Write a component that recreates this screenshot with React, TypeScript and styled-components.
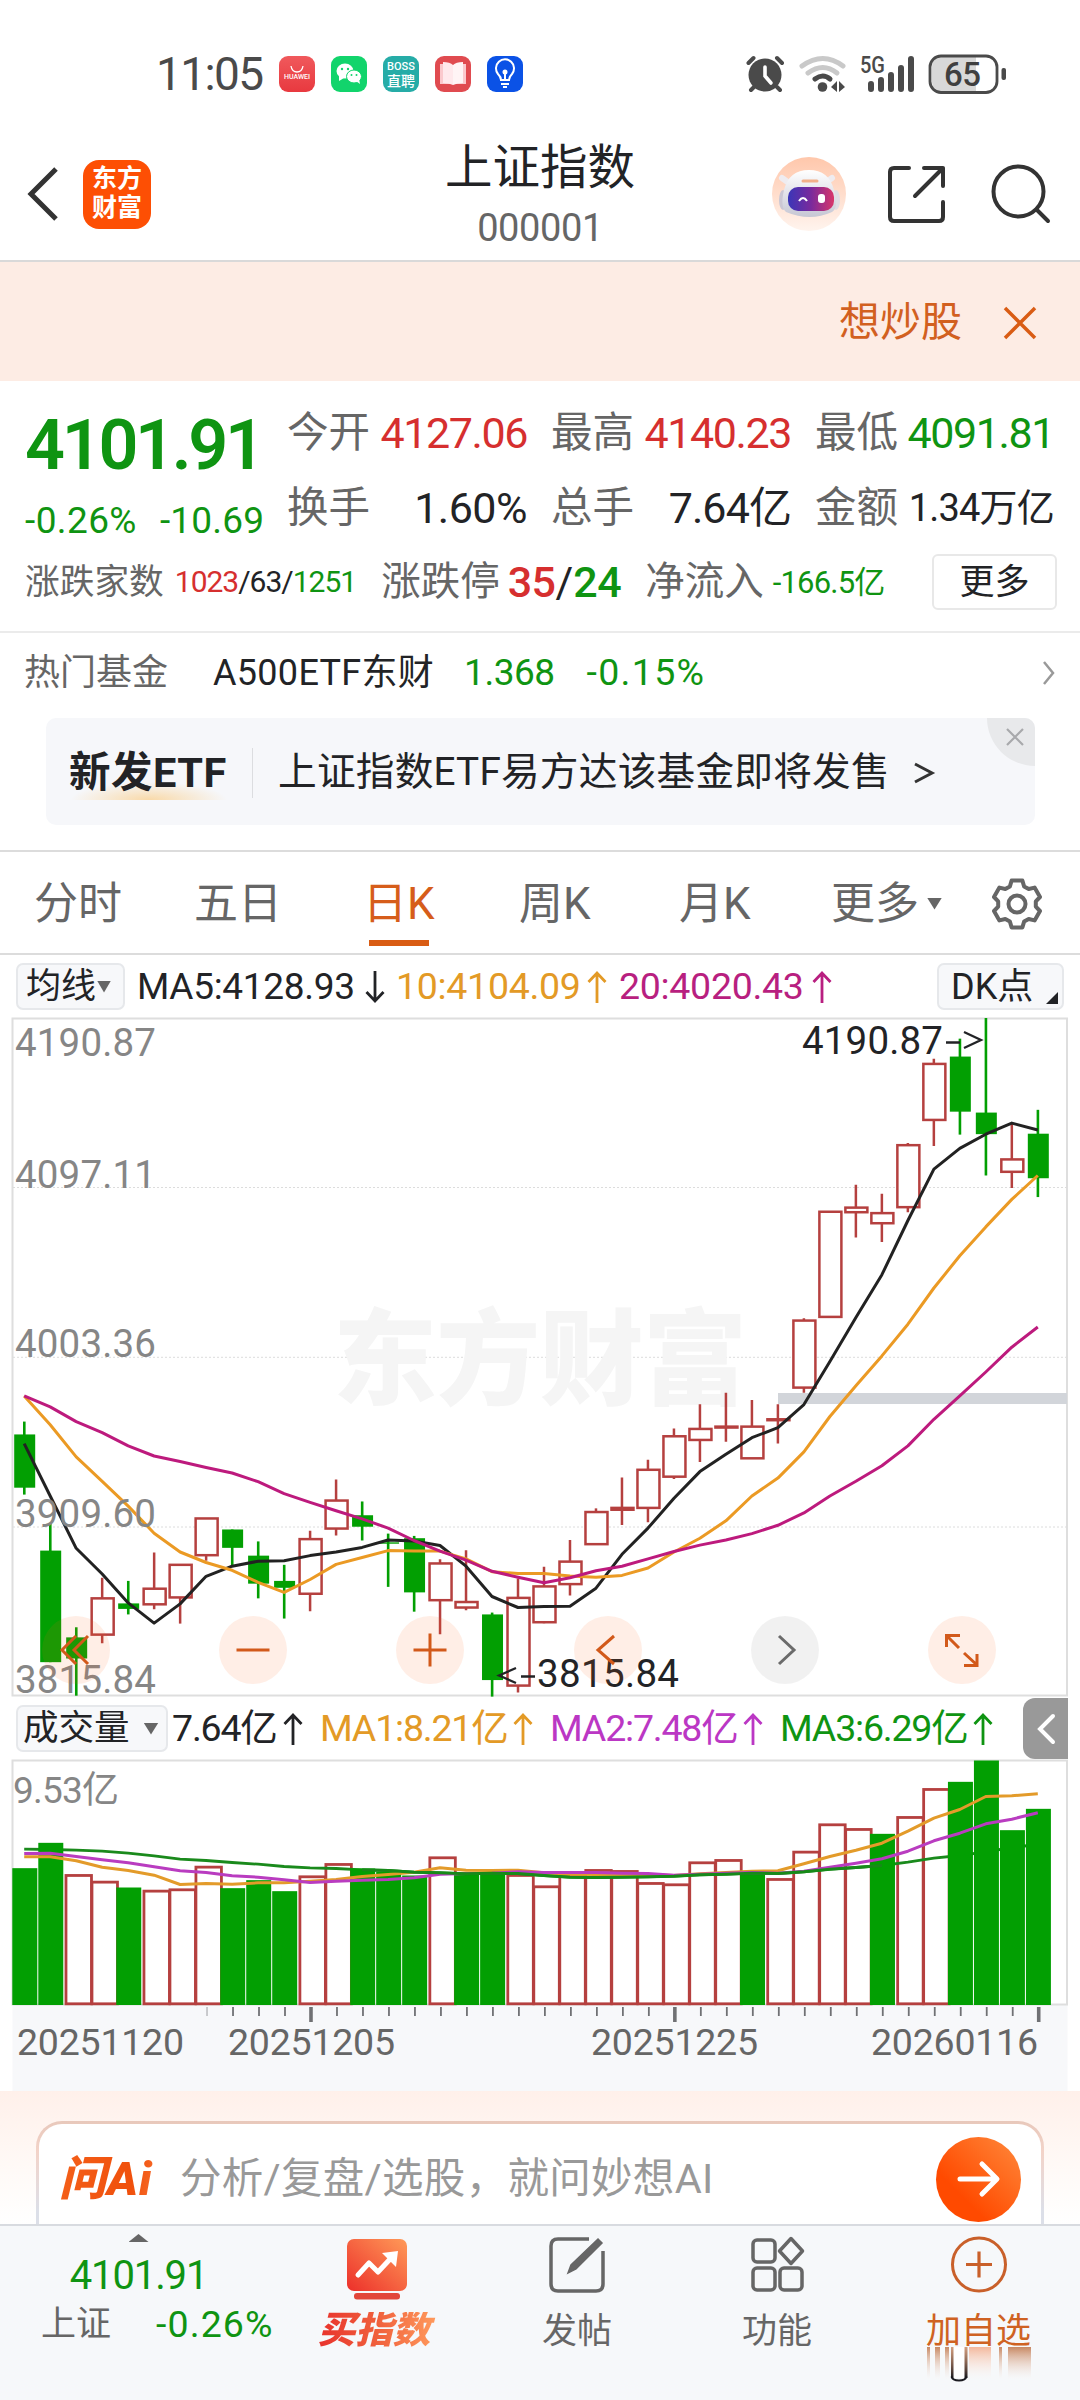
import React from 'react';
import styled, { createGlobalStyle, css } from 'styled-components';

const GREEN = '#0f9412';
const FILL_GREEN = '#029f02';
const RED = '#d62f2f';
const CANDLE_RED = '#b5403f';
const ORANGE = '#d65d1a';
const INK = '#222326';
const GRAY = '#666666';

const GlobalStyle = createGlobalStyle`
  * { box-sizing: border-box; }
  body {
    margin: 0;
    background: #fff;
    font-family: Roboto, 'Noto Sans CJK SC', sans-serif;
    color: ${INK};
  }
  svg { display: block; flex: none; overflow: visible; }
`;

const Screen = styled.div`
  width: 1080px;
  height: 2400px;
  overflow: hidden;
  background: #fff;
  display: flex;
  flex-direction: column;
`;

interface TxtProps {
  $size?: number;
  $color?: string;
  $ls?: number;
  $weight?: number;
}
const Txt = styled.span<TxtProps>`
  font-size: ${(p) => p.$size ?? 36}px;
  color: ${(p) => p.$color ?? INK};
  letter-spacing: ${(p) => p.$ls ?? 0}px;
  font-weight: ${(p) => p.$weight ?? 400};
  line-height: 1;
  white-space: nowrap;
  flex: none;
`;

/* ---------- status bar ---------- */

const StatusBar = styled.div`
  height: 112px;
  flex: none;
  padding: 36px 50px 0 156px;
  display: flex;
  align-items: center;
  justify-content: space-between;
`;
const StatusSide = styled.div<{ $gap: number }>`
  display: flex;
  align-items: center;
  gap: ${(p) => p.$gap}px;
`;
const Clock = styled(Txt)`
  width: 107px;
`;
const AppBadge = styled.div<{ $bg: string }>`
  width: 36px;
  height: 36px;
  border-radius: 9px;
  background: ${(p) => p.$bg};
  color: #fff;
  display: flex;
  flex-direction: column;
  align-items: center;
  justify-content: center;
  font-weight: 500;
  line-height: 1;
`;
const BadgeLine = styled.span<{ $size: number }>`
  font-size: ${(p) => p.$size}px;
  line-height: ${(p) => p.$size + 2}px;
  white-space: nowrap;
`;

function StatusIcons() {
  return (
    <StatusSide $gap={0}>
      <svg width="300" height="56" viewBox="730 45 300 56">
        <g stroke="#4a4a4a" fill="none" strokeLinecap="round">
          <circle cx="765" cy="74" r="16.5" fill="#4a4a4a" stroke="none" />
          <path d="M748.5 62l5-5M782 62l-5-5" strokeWidth="4" />
          <path d="M754 86l-3 3M777 86l3 3" strokeWidth="4" />
          <path d="M765 66v9l6 7" stroke="#fff" strokeWidth="3.6" />
        </g>
        <g fill="none" strokeLinecap="round" strokeWidth="5">
          <path d="M802 65q21-15 41 0" stroke="#c9c9c9" />
          <path d="M808 72q15-11 29 0" stroke="#c9c9c9" />
          <path d="M815 78q8-6 15 0" stroke="#4a4a4a" />
        </g>
        <circle cx="822.5" cy="86" r="4.8" fill="#4a4a4a" />
        <path d="M831 86l6-6v11zM839 80l6 6l-6 5z" fill="#4a4a4a" />
        <g stroke="#4a4a4a" strokeWidth="6" strokeLinecap="round">
          <path d="M871 83v5M881 79v9M891 74v14M901 67v21M911 58v30" />
        </g>
        <text x="860" y="72" fontSize="24" fontWeight="500" fill="#4a4a4a" textLength="25" lengthAdjust="spacingAndGlyphs">5G</text>
        <path d="M942 56h34v35h-34q-10 0-10-10v-15q0-10 10-10z" fill="#d8d8d8" />
        <rect x="930" y="55" width="67" height="36.5" rx="11" fill="none" stroke="#4a4a4a" strokeWidth="2.8" />
        <rect x="1001.500" y="67" width="4.500" height="12" rx="2" fill="#4a4a4a" />
        <text x="944" y="85" fontSize="33" fontWeight="500" fill="#3f3f3f" textLength="37">65</text>
      </svg>
    </StatusSide>
  );
}

function Status() {
  return (
    <StatusBar>
      <StatusSide $gap={16}>
        <Clock $size={46} $ls={-1.6} $color="#4a4a4a">11:05</Clock>
        <AppBadge $bg="linear-gradient(#f0595c,#e8393f)">
          <svg width="14" height="7" viewBox="0 0 14 7"><path d="M1 0q1 6 6 6t6-6" fill="none" stroke="#fff" strokeWidth="1.300" /></svg>
          <BadgeLine $size={7}>HUAWEI</BadgeLine>
        </AppBadge>
        <AppBadge $bg="#12d46c">
          <svg width="26" height="22" viewBox="0 0 26 22">
            <ellipse cx="9" cy="8" rx="8.500" ry="7.500" fill="#fff" />
            <path d="M3 12l0 6l5-3z" fill="#fff" />
            <ellipse cx="18" cy="13.500" rx="7.500" ry="6.500" fill="#fff" stroke="#12d46c" />
            <path d="M20 18l4 3l-1-5z" fill="#fff" />
            <g fill="#12d46c"><circle cx="6" cy="6" r="1.200" /><circle cx="12" cy="6" r="1.200" /><circle cx="15.500" cy="12" r="1" /><circle cx="20.500" cy="12" r="1" /></g>
          </svg>
        </AppBadge>
        <AppBadge $bg="#26aca7">
          <BadgeLine $size={11}>BOSS</BadgeLine>
          <BadgeLine $size={14}>直聘</BadgeLine>
        </AppBadge>
        <AppBadge $bg="#e04b50">
          <svg width="26" height="24" viewBox="0 0 26 24">
            <path d="M0 2h4l9 2l9-2h4v20h-26z" fill="#fbc9cd" />
            <path d="M3 0q7 0 10 3v20q-4-2-10-2z" fill="#ffe9ec" />
            <path d="M23 0q-7 0-10 3v20q4-2 10-2z" fill="#fff4f5" />
          </svg>
        </AppBadge>
        <AppBadge $bg="#0b52e6">
          <svg width="22" height="28" viewBox="0 0 22 28" fill="none" stroke="#fff" strokeWidth="2">
            <path d="M7 20q0-3-3-6a9 9 0 1 1 14 0q-3 3-3 6zM7 24h8M9 27h4M11 20v-7" />
            <circle cx="11" cy="12" r="1.500" fill="#fff" />
          </svg>
        </AppBadge>
      </StatusSide>
      <StatusIcons />
    </StatusBar>
  );
}

/* ---------- header ---------- */

const Header = styled.header`
  height: 150px;
  flex: none;
  border-bottom: 2px solid #d9d9d9;
  display: grid;
  grid-template-columns: 1fr 300px 1fr;
  align-items: center;
`;
const HeaderLeft = styled.div`
  display: flex;
  align-items: center;
  gap: 24px;
  padding: 16px 0 0 26px;
`;
const HeaderRight = styled.div`
  display: flex;
  align-items: center;
  justify-content: flex-end;
  padding: 15px 28px 0 0;
`;
const HeaderTitle = styled.div`
  display: flex;
  flex-direction: column;
  align-items: center;
  gap: 16px;
  padding-top: 20px;
`;
const Brand = styled.div`
  width: 68px;
  height: 69px;
  border-radius: 16px;
  background: #fd4f04;
  color: #fff;
  display: flex;
  flex-direction: column;
  align-items: center;
  padding-top: 4px;
`;
const BrandLine = styled.span`
  font: 700 25px/29px Roboto, 'Noto Sans CJK SC', sans-serif;
`;

function TopHeader() {
  return (
    <Header>
      <HeaderLeft>
        <svg width="33" height="56" viewBox="0 0 33 56"><path d="M30 3L5 28L30 53" fill="none" stroke="#333" strokeWidth="5" /></svg>
        <Brand>
          <BrandLine>东方</BrandLine>
          <BrandLine>财富</BrandLine>
        </Brand>
      </HeaderLeft>
      <HeaderTitle>
        <Txt $size={47.5}>上证指数</Txt>
        <Txt $size={38} $color={GRAY} $ls={-0.4}>000001</Txt>
      </HeaderTitle>
      <HeaderRight>
        <svg width="284" height="80" viewBox="768 154 284 80">
          <defs>
            <linearGradient id="halo" x1="0" y1="0" x2="0" y2="1"><stop offset="0" stopColor="#ffc7ab" /><stop offset="1" stopColor="#fff4ee" /></linearGradient>
            <linearGradient id="visor"><stop offset="0" stopColor="#3a36b8" /><stop offset=".5" stopColor="#7a2a9c" /><stop offset="1" stopColor="#d8356a" /></linearGradient>
            <linearGradient id="shell" x1="0" y1="0" x2="0" y2="1"><stop offset="0" stopColor="#fff" /><stop offset="1" stopColor="#c6c7d4" /></linearGradient>
          </defs>
          <circle cx="809" cy="194" r="37" fill="url(#halo)" />
          <path d="M782 178l7 5M832 178l-7 5" stroke="#efecf0" strokeWidth="6" strokeLinecap="round" />
          <ellipse cx="783" cy="200" rx="4" ry="10" fill="#cbc7d4" />
          <ellipse cx="836" cy="200" rx="4" ry="10" fill="#e0dbe3" />
          <path d="M784 190q5-20 25-20t25 20q5 18-2 22q-22 10-46 0q-6-5-2-22z" fill="url(#shell)" />
          <path d="M803 181h14" stroke="#f2b08a" strokeWidth="3" strokeLinecap="round" />
          <rect x="788" y="187" width="46" height="24" rx="10" fill="url(#visor)" />
          <path d="M799 201q4-6 8 0" stroke="#fff" strokeWidth="2" fill="none" />
          <rect x="818" y="194" width="7" height="9" rx="3" fill="#fff" />
          <g fill="none" stroke="#333" strokeWidth="4" strokeLinecap="round" strokeLinejoin="round">
            <path d="M909 168h-15q-4 0-4 4v45q0 4 4 4h45q4 0 4-4v-15" />
            <path d="M924 168h19v18M943 168l-28 28" />
            <circle cx="1018.500" cy="191.500" r="25" />
            <path d="M1037 210l11 11" />
          </g>
        </svg>
      </HeaderRight>
    </Header>
  );
}

/* ---------- promo banner ---------- */

const Banner = styled.div`
  height: 119px;
  flex: none;
  background: #fdece4;
  display: flex;
  align-items: center;
  justify-content: flex-end;
  gap: 41px;
  padding: 2px 43px 0 0;
`;

/* ---------- quote ---------- */

const Quote = styled.section`
  height: 252px;
  flex: none;
  border-bottom: 2px solid #ebebeb;
  padding: 27px 25px 0;
  display: flex;
  flex-direction: column;
`;
const QuoteTop = styled.div`
  display: grid;
  grid-template-columns: 238px 240px 240px 239px;
  column-gap: 24px;
  height: 143px;
`;
const PriceBox = styled.div`
  display: flex;
  flex-direction: column;
  padding-top: 2px;
`;
const Change = styled.div`
  display: flex;
  gap: 23px;
  padding-top: 22px;
`;
const StatColumn = styled.div`
  display: grid;
  grid-template-rows: 50px 50px;
  row-gap: 25px;
`;
const Stat = styled.div`
  display: flex;
  align-items: center;
  justify-content: space-between;
`;
const BreadthRow = styled.div`
  display: flex;
  align-items: center;
  height: 62px;
`;
const Spacer = styled.div<{ $w: number }>`
  width: ${(p) => p.$w}px;
  flex: none;
`;
const MoreButton = styled.button`
  width: 125px;
  height: 56px;
  margin-left: auto;
  margin-right: -2px;
  border: 2px solid #e8e8e8;
  border-radius: 6px;
  background: #fff;
  font: 400 35px/1 Roboto, 'Noto Sans CJK SC', sans-serif;
  color: ${INK};
  padding: 0;
`;

interface StatDef { label: string; value: string; color: string; ls: number; size?: number }
const stats: StatDef[][] = [
  [
    { label: '今开', value: '4127.06', color: RED, ls: -1.4 },
    { label: '换手', value: '1.60%', color: INK, ls: -0.5 },
  ],
  [
    { label: '最高', value: '4140.23', color: RED, ls: -1.4 },
    { label: '总手', value: '7.64亿', color: INK, ls: -0.9 },
  ],
  [
    { label: '最低', value: '4091.81', color: GREEN, ls: -1.4 },
    { label: '金额', value: '1.34万亿', color: INK, ls: -0.8, size: 38 },
  ],
];

function QuotePanel() {
  return (
    <Quote>
      <QuoteTop>
        <PriceBox>
          <Txt $size={70} $weight={600} $color={GREEN} $ls={-3.3}>4101.91</Txt>
          <Change>
            <Txt $size={37} $color={GREEN} $ls={0.4}>-0.26%</Txt>
            <Txt $size={37} $color={GREEN} $ls={0.2}>-10.69</Txt>
          </Change>
        </PriceBox>
        {stats.map((col, i) => (
          <StatColumn key={i}>
            {col.map((s) => (
              <Stat key={s.label}>
                <Txt $size={41.5} $color={GRAY}>{s.label}</Txt>
                <Txt $size={s.size ?? 43} $color={s.color} $ls={s.ls}>{s.value}</Txt>
              </Stat>
            ))}
          </StatColumn>
        ))}
      </QuoteTop>
      <BreadthRow>
        <Txt $size={34.7} $color={GRAY}>涨跌家数</Txt>
        <Spacer $w={11} />
        <Txt $size={30} $color={RED} $ls={-1}>1023</Txt>
        <Txt $size={30} $ls={-1}>/63/</Txt>
        <Txt $size={30} $color={GREEN} $ls={-1}>1251</Txt>
        <Spacer $w={25} />
        <Txt $size={39.5} $color={GRAY}>涨跌停</Txt>
        <Spacer $w={8} />
        <Txt $size={43} $weight={500} $color={RED} $ls={-0.5}>35</Txt>
        <Txt $size={43}>/</Txt>
        <Txt $size={43} $weight={500} $color={GREEN} $ls={-0.5}>24</Txt>
        <Spacer $w={24} />
        <Txt $size={39.5} $color={GRAY}>净流入</Txt>
        <Spacer $w={9} />
        <Txt $size={31} $color={GREEN} $ls={-0.8}>-166.5亿</Txt>
        <MoreButton>更多</MoreButton>
      </BreadthRow>
    </Quote>
  );
}

/* ---------- fund row and ETF card ---------- */

const FundRow = styled.div`
  height: 79px;
  flex: none;
  padding: 0 24px 0 24px;
  display: flex;
  align-items: center;
`;
const PushRight = styled.div`
  margin-left: auto;
`;
const EtfCard = styled.div`
  position: relative;
  height: 107px;
  flex: none;
  margin: 6px 45px 25px 46px;
  padding: 2px 0 0 23px;
  border-radius: 10px;
  background: #f6f7fa;
  overflow: hidden;
  display: flex;
  align-items: center;
`;
const EtfTag = styled.div`
  height: 54px;
  width: 160px;
  padding-top: 6px;
  background: radial-gradient(ellipse 78px 18px at 50% 100%, #f9d9a8, rgba(249, 217, 168, 0) 100%) no-repeat 0 100% / 100% 19px;
`;
const Rule = styled.div`
  width: 1px;
  height: 50px;
  margin: 0 25px 0 23px;
  background: #dcdde0;
`;
const CloseCorner = styled.div`
  position: absolute;
  top: 0;
  right: 0;
  width: 48px;
  height: 48px;
  border-bottom-left-radius: 48px;
  background: #e8e9eb;
  display: flex;
  align-items: center;
  justify-content: center;
  padding: 0 0 10px 8px;
`;

function Funds() {
  return (
    <>
      <FundRow>
        <Txt $size={36} $color={GRAY}>热门基金</Txt>
        <Spacer $w={45} />
        <Txt $size={36} $ls={0.3}>A500ETF东财</Txt>
        <Spacer $w={30} />
        <Txt $size={37} $color={GREEN} $ls={-0.5}>1.368</Txt>
        <Spacer $w={32} />
        <Txt $size={37.5} $color={GREEN} $ls={1.3}>-0.15%</Txt>
        <PushRight>
          <svg width="14" height="26" viewBox="0 0 14 26"><path d="M2 2l9 11l-9 11" fill="none" stroke="#999" strokeWidth="2.500" /></svg>
        </PushRight>
      </FundRow>
      <EtfCard>
        <EtfTag><Txt $size={41.5} $weight={700} $ls={0.5}>新发ETF</Txt></EtfTag>
        <Rule />
        <Txt $size={38.7} $ls={0.2}>上证指数ETF易方达该基金即将发售</Txt>
        <Spacer $w={23} />
        <svg width="22" height="24" viewBox="0 0 22 24"><path d="M2 3l17 9l-17 9" fill="none" stroke="#333" strokeWidth="3" /></svg>
        <CloseCorner>
          <svg width="18" height="18" viewBox="0 0 18 18"><path d="M1 1l16 16M17 1L1 17" stroke="#a8a9ac" strokeWidth="2.200" /></svg>
        </CloseCorner>
      </EtfCard>
    </>
  );
}

/* ---------- period tabs ---------- */

const Tabs = styled.nav`
  height: 105px;
  flex: none;
  border-top: 2px solid #dcdcdc;
  border-bottom: 2px solid #dcdcdc;
  padding-left: 34px;
  display: grid;
  grid-template-columns: 160px 169px 156px 160px 152px 159px 54px;
  justify-items: start;
`;
const Tab = styled.div<{ $active?: boolean }>`
  display: flex;
  align-items: center;
  gap: 8px;
  height: 101px;
  padding-top: 2px;
  font-size: 44px;
  line-height: 1;
  white-space: nowrap;
  color: ${(p) => (p.$active ? ORANGE : GRAY)};
  ${(p) =>
    p.$active &&
    css`
      background: linear-gradient(#d95c14, #d95c14) no-repeat 50% 88px / 60px 6px;
    `}
`;
const Triangle = styled.i<{ $w: number; $h: number; $color?: string; $up?: boolean }>`
  width: ${(p) => p.$w}px;
  height: ${(p) => p.$h}px;
  background: ${(p) => p.$color ?? GRAY};
  clip-path: ${(p) => (p.$up ? 'polygon(50% 0, 100% 100%, 0 100%)' : 'polygon(0 0, 100% 0, 50% 100%)')};
`;

function gearOutline(): string {
  const pts: string[] = [];
  for (let i = 0; i < 6; i++) {
    const mid = -90 + i * 60;
    [[-22, 19], [-13, 24], [13, 24], [22, 19]].forEach(([a, r]) => {
      const t = ((mid + a) * Math.PI) / 180;
      pts.push(`${(27 + r * Math.cos(t)).toFixed(1)},${(27 + r * Math.sin(t)).toFixed(1)}`);
    });
  }
  return pts.join(' ');
}

function PeriodTabs() {
  return (
    <Tabs>
      <Tab>分时</Tab>
      <Tab>五日</Tab>
      <Tab $active>日K</Tab>
      <Tab>周K</Tab>
      <Tab>月K</Tab>
      <Tab>更多<Triangle $w={15} $h={12} /></Tab>
      <Tab>
        <svg width="54" height="54" viewBox="0 0 54 54" fill="none" stroke={GRAY} strokeWidth="4" strokeLinejoin="round">
          <polygon points={gearOutline()} />
          <circle cx="27" cy="27" r="8.500" />
        </svg>
      </Tab>
    </Tabs>
  );
}

/* ---------- indicator rows ---------- */

const IndicatorRow = styled.div<{ $h: number; $pad: string }>`
  height: ${(p) => p.$h}px;
  flex: none;
  padding: ${(p) => p.$pad};
  display: flex;
  align-items: center;
`;
const Picker = styled.div<{ $w: number; $pad: string; $gap?: number }>`
  position: relative;
  width: ${(p) => p.$w}px;
  height: 47px;
  flex: none;
  padding: ${(p) => p.$pad};
  border: 2px solid #e6e8eb;
  border-radius: 7px;
  background: #f7f8fa;
  display: flex;
  align-items: center;
  gap: ${(p) => p.$gap ?? 0}px;
`;
const Corner = styled.i`
  position: absolute;
  right: 4px;
  bottom: 4px;
  width: 12px;
  height: 12px;
  background: ${INK};
  clip-path: polygon(100% 0, 100% 100%, 0 100%);
`;
const Reading = styled.div<{ $w: number; $left: number }>`
  display: flex;
  align-items: center;
  justify-content: space-between;
  width: ${(p) => p.$w}px;
  margin-left: ${(p) => p.$left}px;
`;
const CollapseButton = styled.div`
  width: 45px;
  height: 61px;
  margin-left: auto;
  border-radius: 12px 0 0 12px;
  background: #999;
  display: flex;
  align-items: center;
  justify-content: center;
`;

function TrendArrow({ color, down }: { color: string; down?: boolean }) {
  return (
    <svg width="20" height="34" viewBox="0 0 20 34" fill="none" stroke={color} strokeWidth="2.800">
      <path d={down ? 'M10 1v30M1.500 22L10 31L18.500 22' : 'M10 33V3M1.500 12L10 3L18.500 12'} />
    </svg>
  );
}

/* ---------- price chart ---------- */

const STEP = 25.99;
const X0 = 24.2;
const cx = (i: number) => X0 + i * STEP;

const PRICE_SCALE = 2.178;
const py = (v: number) => (v - 39) / PRICE_SCALE;

type Candle = [up: 0 | 1, high: number, top: number, bottom: number, low: number];
const candles: Candle[] = [
  [0, 918, 946, 1062, 1077], [0, 1140, 1199, 1442, 1442], [0, 1366, 1388, 1434, 1515],
  [1, 1258, 1303, 1382, 1401], [0, 1265, 1314, 1326, 1338], [1, 1203, 1282, 1316, 1327],
  [1, 1230, 1230, 1301, 1358], [1, 1129, 1129, 1209, 1221], [0, 1153, 1153, 1193, 1233],
  [0, 1179, 1210, 1271, 1303], [0, 1230, 1265, 1280, 1347], [1, 1156, 1174, 1293, 1331],
  [1, 1044, 1090, 1151, 1166], [0, 1092, 1122, 1147, 1177], [0, 1162, 1181, 1184, 1278],
  [0, 1167, 1172, 1290, 1332], [1, 1218, 1227, 1307, 1381], [1, 1198, 1311, 1323, 1329],
  [0, 1334, 1338, 1481, 1517], [1, 1260, 1302, 1493, 1508], [1, 1234, 1277, 1355, 1357],
  [1, 1176, 1223, 1272, 1297], [1, 1107, 1115, 1185, 1185], [1, 1040, 1106, 1110, 1143],
  [1, 1001, 1023, 1106, 1137], [1, 933, 950, 1038, 1043], [1, 880, 934, 958, 1006],
  [1, 855, 929, 931, 962], [1, 871, 929, 998, 998], [1, 880, 913, 915, 966],
  [1, 693, 698, 844, 855], [1, 461, 461, 690, 691], [1, 402, 452, 462, 517],
  [1, 422, 464, 486, 527], [1, 311, 316, 451, 462], [1, 128, 139, 261, 318],
  [0, 84, 123, 243, 293], [0, 39, 245, 292, 382], [1, 270, 347, 374, 409],
  [0, 239, 291, 388, 429],
];
const ma5 = [966, 1080, 1194, 1250, 1313, 1357, 1315, 1255, 1233, 1222, 1221, 1210, 1202, 1192, 1176, 1178, 1188, 1233, 1299, 1323, 1321, 1320, 1281, 1207, 1150, 1085, 1027, 989, 953, 931, 881, 787, 691, 598, 480, 368, 323, 292, 268, 283];
const ma10 = [862, 925, 995, 1048, 1102, 1161, 1202, 1225, 1242, 1268, 1290, 1262, 1229, 1214, 1199, 1200, 1200, 1217, 1245, 1249, 1249, 1254, 1257, 1253, 1237, 1202, 1172, 1134, 1080, 1041, 984, 907, 840, 775, 706, 627, 557, 494, 434, 382];
const ma20 = [862, 886, 918, 942, 971, 993, 1005, 1018, 1030, 1049, 1075, 1094, 1112, 1130, 1150, 1177, 1200, 1220, 1244, 1257, 1269, 1258, 1243, 1233, 1217, 1201, 1187, 1176, 1162, 1144, 1117, 1080, 1048, 1014, 971, 913, 862, 810, 756, 712];

const line = (vals: number[], y: (v: number) => number) =>
  vals.map((v, i) => `${cx(i).toFixed(1)},${y(v).toFixed(1)}`).join(' ');

const axisLabels: [string, number][] = [
  ['4190.87', 37.5], ['4097.11', 170], ['4003.36', 339], ['3909.60', 509], ['3815.84', 675],
];

const ChartArea = styled.div`
  position: relative;
  height: 679px;
  flex: none;
`;
const Controls = styled.div`
  position: absolute;
  left: 42px;
  right: 84px;
  bottom: 13px;
  display: flex;
  justify-content: space-between;
`;
const RoundControl = styled.div<{ $muted?: boolean }>`
  width: 68px;
  height: 68px;
  border-radius: 50%;
  background: ${(p) => (p.$muted ? 'rgba(0,0,0,.055)' : 'rgba(255,100,30,.11)')};
`;
const controlPaths = [
  'M34 20L20 34L34 48M46 20L32 34L46 48',
  'M17.500 34H50.500',
  'M17.500 34H50.500M34 17.500V50.500',
  'M40 20L24 34L40 48',
  'M28 20L43 34L28 48',
  'M18.500 31V19.500H32M19 20L31 32M49 38V49.500H36M49 49L36 37',
];

function PriceChart() {
  return (
    <ChartArea>
      <svg width="1080" height="679" viewBox="0 0 1080 679">
        <rect x="12.500" y="0.500" width="1054.500" height="677" fill="none" stroke="#dedede" strokeWidth="2" />
        {[169.5, 339.3, 509].map((y) => (
          <path key={y} d={`M13 ${y}H1067`} stroke="#dcdcdc" strokeDasharray="2 2" />
        ))}
        <text x="333" y="379" fontSize="104" fontWeight="900" fill="#f5f5f5" textLength="414">东方财富</text>
        <rect x="778" y="375" width="289" height="11" fill="#d2d5da" />
        {candles.map(([up, h, t, b, l], i) => {
          const x = cx(i);
          if (up) {
            const top = py(t);
            const bot = py(b);
            return (
              <g key={i} stroke={CANDLE_RED} strokeWidth="2.500" fill="#fff">
                <path d={`M${x} ${py(h)}V${top}M${x} ${bot}V${py(l)}`} />
                <rect x={x - 10.5} y={top} width="22" height={Math.max(bot - top, 0.5)} />
              </g>
            );
          }
          return (
            <g key={i} fill={FILL_GREEN}>
              <rect x={x - 1.2} y={py(h)} width="2.600" height={py(l) - py(h)} />
              <rect x={x - 10} y={py(t)} width="21" height={py(b) - py(t)} />
            </g>
          );
        })}
        <g fill="none" strokeWidth="3" strokeLinejoin="round">
          <polyline points={line(ma5, py)} stroke="#222" />
          <polyline points={line(ma10, py)} stroke="#eb9a24" />
          <polyline points={line(ma20, py)} stroke="#bd1a7d" />
        </g>
        {axisLabels.map(([t, y]) => (
          <text key={t} x="15" y={y} fontSize="38.500" fill="#868686" textLength="141">{t}</text>
        ))}
        <text x="802" y="36" fontSize="38.500" fill={INK} textLength="141">4190.87</text>
        <text x="537" y="669" fontSize="38.500" fill={INK} textLength="142">3815.84</text>
        <g fill="none" stroke={INK} strokeWidth="2.300">
          <path d="M946 24.500H960M964 14L981 22L964 30" />
          <path d="M516 650L499 657.500L516 665M521 658.500H535" />
        </g>
      </svg>
      <Controls>
        {controlPaths.map((d, i) => (
          <RoundControl key={d} $muted={i === 4}>
            <svg width="68" height="68" viewBox="0 0 68 68">
              <path d={d} fill="none" stroke={i === 4 ? '#6b6b6b' : '#d2591a'} strokeWidth="3" />
            </svg>
          </RoundControl>
        ))}
      </Controls>
    </ChartArea>
  );
}

/* ---------- volume chart ---------- */

const vy = (v: number) => (v - 211) / 3 + 0.5;
const volumes: [0 | 1, number][] = [
  [0, 534], [0, 458], [1, 555], [1, 575], [0, 592], [1, 602], [1, 598], [1, 530], [0, 594], [0, 570],
  [0, 603], [1, 559], [1, 522], [0, 535], [0, 545], [0, 556], [1, 502], [0, 549], [0, 549], [1, 555],
  [1, 589], [1, 558], [1, 540], [1, 543], [1, 579], [1, 583], [1, 517], [1, 510], [0, 542], [1, 567],
  [1, 485], [1, 403], [1, 417], [0, 431], [1, 381], [1, 297], [0, 275], [0, 211], [0, 420], [0, 356],
];
const vma1 = [500, 500, 512, 531, 541, 555, 583, 580, 582, 578, 578, 573, 568, 559, 553, 546, 533, 540, 541, 540, 548, 552, 553, 552, 553, 556, 551, 547, 543, 542, 521, 499, 480, 459, 423, 384, 358, 319, 317, 311];
const vma2 = [490, 489, 499, 509, 518, 530, 542, 547, 557, 561, 569, 577, 573, 570, 568, 563, 552, 550, 549, 545, 547, 547, 547, 549, 550, 555, 552, 549, 547, 549, 543, 531, 519, 506, 483, 452, 429, 401, 387, 368];
const vma3 = [477, 478, 480, 483, 489, 497, 507, 511, 517, 522, 529, 533, 535, 539, 541, 546, 548, 551, 549, 550, 556, 561, 562, 561, 560, 558, 554, 552, 549, 550, 545, 537, 532, 526, 516, 504, 496, 485, 472, 463];
const dates: [string, number][] = [['20251120', 17], ['20251205', 228], ['20251225', 591], ['20260116', 871]];
const majorTicks = [11, 25, 39];

const VolumeArea = styled.div`
  height: 331px;
  flex: none;
`;

function VolumeChart() {
  const floor = vy(940);
  return (
    <VolumeArea>
      <svg width="1080" height="331" viewBox="0 0 1080 331">
        <rect x="12.500" y="245" width="1055" height="86" fill="#f7f8fa" />
        <rect x="12.500" y="0.500" width="1054.500" height="244" fill="none" stroke="#dedede" strokeWidth="2" />
        <text x="13" y="43" fontSize="37" fill="#868686" textLength="106">9.53亿</text>
        {volumes.map(([up, v], i) =>
          up ? (
            <rect key={i} x={cx(i) - 10.2} y={vy(v) + 0.3} width="25.500" height={floor - vy(v)} fill="#fff" stroke={CANDLE_RED} strokeWidth="2.800" />
          ) : null
        )}
        <polyline points={line(vma3, vy)} fill="none" stroke="#1a8a1c" strokeWidth="2.800" />
        {volumes.map(([up, v], i) =>
          up ? null : <rect key={i} x={cx(i) - 11.9} y={vy(v)} width="25" height={floor - vy(v) + 1.5} fill={FILL_GREEN} />
        )}
        <g fill="none" strokeWidth="3" strokeLinejoin="round">
          <polyline points={line(vma1, vy)} stroke="#e39b2a" />
          <polyline points={line(vma2, vy)} stroke="#b93cc0" />
          <polyline points={line(vma3, vy).split(' ').slice(13, 34).join(' ')} stroke="#178a19" />
        </g>
        {candles.map((_, i) => {
          if (i < 7) return null;
          const major = majorTicks.includes(i);
          return (
            <path
              key={i}
              d={`M${cx(i) + 0.9} 247v${major ? 15 : 9}`}
              stroke={i === 7 ? '#c4c5c8' : '#707174'}
              strokeWidth={major ? 3.6 : 1.8}
            />
          );
        })}
        {dates.map(([d, x]) => (
          <text key={d} x={x} y="295" fontSize="37.500" fill={GRAY} textLength="167">{d}</text>
        ))}
      </svg>
    </VolumeArea>
  );
}

/* ---------- AI prompt ---------- */

const AiStrip = styled.div`
  height: 133px;
  flex: none;
  padding: 30px 36px 0;
  background: linear-gradient(#fff0ea, #fffaf7 60%, #fff);
  overflow: hidden;
`;
const AiBox = styled.div`
  height: 130px;
  border-radius: 26px;
  padding: 3px 3px 0;
  background: linear-gradient(#e8c8bb, #f3d3c8 30px, #dcdfe8 90px);
`;
const AiInner = styled.div`
  height: 124px;
  border-radius: 23px;
  background: #fff;
  display: flex;
  align-items: center;
  padding: 0 20px 14px 20px;
`;
const AiLogo = styled.div`
  width: 121px;
  font: italic 900 47px/54px Roboto, 'Noto Sans CJK SC', sans-serif;
  letter-spacing: 1px;
  white-space: nowrap;
  background: linear-gradient(100deg, #f4601a, #f0500c 60%, #ff8a4a);
  background-clip: text;
  -webkit-background-clip: text;
  color: transparent;
`;

const SendButton = styled.div`
  width: 85px;
  height: 85px;
  margin-left: auto;
  border-radius: 50%;
  background: linear-gradient(45deg, #ff4a00 30%, #ff8a3c);
  display: flex;
  align-items: center;
  justify-content: center;
`;

/* ---------- bottom navigation ---------- */

const BottomNav = styled.nav`
  height: 176px;
  flex: none;
  border-top: 2px solid #d8dbe0;
  background: #f6f8fa;
  display: grid;
  grid-template-columns: 277px 200px 200px 200px 203px;
`;
const IndexCell = styled.div`
  display: flex;
  flex-direction: column;
  align-items: center;
  padding: 8px 0 0 0;
`;
const IndexPrice = styled(Txt)`
  margin-top: 14px;
`;
const IndexRow = styled.div`
  display: flex;
  align-items: center;
  gap: 45px;
  align-self: stretch;
  padding: 10px 0 0 41px;
`;
const NavItem = styled.div`
  display: flex;
  flex-direction: column;
  align-items: center;
  padding-top: 10px;
`;
const NavLabel = styled.span<{ $color?: string }>`
  margin-top: 12px;
  font-size: 35px;
  line-height: 36px;
  height: 36px;
  color: ${(p) => p.$color ?? GRAY};
`;
const HotLabel = styled(NavLabel)`
  margin-top: 10px;
  font-size: 37.5px;
  font-weight: 900;
  font-style: italic;
  padding-right: 6px;
  background: linear-gradient(90deg, #e8322c, #f0603c 50%, #ff9a5c);
  background-clip: text;
  -webkit-background-clip: text;
  color: transparent;
`;
const Smear = styled.svg`
  margin-top: -3px;
`;

function Nav() {
  return (
    <BottomNav>
      <IndexCell>
        <Triangle $w={20} $h={8} $up />
        <IndexPrice $size={40} $color={GREEN} $ls={-1.1}>4101.91</IndexPrice>
        <IndexRow>
          <Txt $size={35} $color={GRAY}>上证</Txt>
          <Txt $size={37.5} $color={GREEN} $ls={1.1}>-0.26%</Txt>
        </IndexRow>
      </IndexCell>
      <NavItem>
        <svg width="62" height="66" viewBox="0 0 62 66">
          <defs><linearGradient id="buy" x1="0" y1="1" x2="1" y2="0"><stop offset="0" stopColor="#ec2f2a" /><stop offset="1" stopColor="#ff9a58" /></linearGradient></defs>
          <rect x="1" y="3" width="60" height="52" rx="7" fill="url(#buy)" />
          <rect x="8" y="57" width="46" height="6.500" rx="3" fill="#e2463a" />
          <path d="M12 39L23 27L32 36L46 21" fill="none" stroke="#fff" strokeWidth="5" strokeLinecap="round" strokeLinejoin="round" />
          <path d="M36 17l16-2l-2 16z" fill="#fff" />
        </svg>
        <HotLabel>买指数</HotLabel>
      </NavItem>
      <NavItem>
        <svg width="60" height="66" viewBox="0 0 60 66" fill="none" stroke={GRAY} strokeWidth="3.500">
          <path d="M42 3H11q-7 0-7 7v38q0 7 7 7h38q7 0 7-7V15" />
          <path d="M21 37l3-8L51 3l4 4L29 33z" fill={GRAY} strokeWidth="1.500" />
        </svg>
        <NavLabel>发帖</NavLabel>
      </NavItem>
      <NavItem>
        <svg width="56" height="66" viewBox="0 0 56 66" fill="none" stroke={GRAY} strokeWidth="3.500" strokeLinejoin="round">
          <rect x="4" y="4" width="22" height="22" rx="4" />
          <rect x="4" y="32" width="22" height="22" rx="4" />
          <rect x="31" y="32" width="22" height="22" rx="4" />
          <path d="M42 2.500L53.500 15L42 27.500L30.500 15z" />
        </svg>
        <NavLabel>功能</NavLabel>
      </NavItem>
      <NavItem>
        <svg width="60" height="66" viewBox="0 0 60 66" fill="none" stroke="#c9602a" strokeWidth="3">
          <circle cx="30" cy="28.500" r="26.500" />
          <path d="M17 28.500h26M30 15.500v26" strokeWidth="3.200" />
        </svg>
        <NavLabel $color="#cf6222">加自选</NavLabel>
        <Smear width="106" height="36" viewBox="0 0 106 36">
          <defs>
            <linearGradient id="fade" x1="0" y1="0" x2="0" y2="1"><stop offset="0" stopColor="#b8622f" stopOpacity=".75" /><stop offset="1" stopColor="#f3d9cb" stopOpacity="0" /></linearGradient>
            <linearGradient id="peach" x1="0" y1="0" x2="0" y2="1"><stop offset="0" stopColor="#f3b79b" /><stop offset="1" stopColor="#fdf0e9" stopOpacity="0" /></linearGradient>
            <linearGradient id="dark" x1="0" y1="0" x2="0" y2="1"><stop offset="0" stopColor="#b8622f" stopOpacity=".6" /><stop offset="1" stopColor="#1a1a20" /></linearGradient>
          </defs>
          <rect x="1" width="3" height="32" fill="url(#fade)" />
          <rect x="9" width="5" height="32" fill="url(#fade)" />
          <rect x="19" width="4" height="32" fill="url(#fade)" />
          <rect x="43" width="22" height="32" fill="url(#peach)" />
          <rect x="73" width="3" height="32" fill="url(#fade)" />
          <rect x="82" width="23" height="32" fill="url(#fade)" />
          <rect x="27" width="12" height="31" fill="#fff" />
          <rect x="25" width="2.500" height="31" fill="url(#dark)" />
          <rect x="38.500" width="3" height="31" fill="url(#dark)" />
          <path d="M25.500 29.500q1 4 7.500 4t7.500-4" fill="none" stroke="#1a1a20" strokeWidth="2" />
        </Smear>
      </NavItem>
    </BottomNav>
  );
}

export default function App() {
  return (
    <Screen>
      <GlobalStyle />
      <Status />
      <TopHeader />
      <Banner>
        <Txt $size={41} $color="#d2601f">想炒股</Txt>
        <svg width="34" height="34" viewBox="0 0 34 34"><path d="M2 2l30 30M32 2L2 32" stroke="#d95c14" strokeWidth="3.500" /></svg>
      </Banner>
      <QuotePanel />
      <Funds />
      <PeriodTabs />
      <IndicatorRow $h={63} $pad="0 16px 0">
        <Picker $w={109} $pad="0 0 0 8px" $gap={1}>
          <Txt $size={35}>均线</Txt>
          <Triangle $w={14} $h={12} />
        </Picker>
        <Reading $w={248} $left={12}>
          <Txt $size={37} $ls={-0.3}>MA5:4128.93</Txt>
          <TrendArrow color={INK} down />
        </Reading>
        <Reading $w={211} $left={11}>
          <Txt $size={37.5}  $color="#e39a26" $ls={-0.3}>10:4104.09</Txt>
          <TrendArrow color="#e39a26" />
        </Reading>
        <Reading $w={213} $left={12}>
          <Txt $size={37.5} $color="#b81f80" $ls={-0.3}>20:4020.43</Txt>
          <TrendArrow color="#b81f80" />
        </Reading>
        <PushRight>
          <Picker $w={127} $pad="0 0 0 12px">
            <Txt $size={36}>DK点</Txt>
            <Corner />
          </Picker>
        </PushRight>
      </IndicatorRow>
      <PriceChart />
      <IndicatorRow $h={63} $pad="0 12px 0 16px">
        <Picker $w={152} $pad="0 0 0 5px" $gap={14}>
          <Txt $size={35.5}>成交量</Txt>
          <Triangle $w={15} $h={12} />
        </Picker>
        <Reading $w={131} $left={4}>
          <Txt $size={37.5} $ls={-1.2}>7.64亿</Txt>
          <TrendArrow color={INK} />
        </Reading>
        <Reading $w={213} $left={17}>
          <Txt $size={37.5} $color="#e39a26" $ls={-1.2}>MA1:8.21亿</Txt>
          <TrendArrow color="#e39a26" />
        </Reading>
        <Reading $w={213} $left={17}>
          <Txt $size={37.5} $color="#bb37c4" $ls={-1.2}>MA2:7.48亿</Txt>
          <TrendArrow color="#bb37c4" />
        </Reading>
        <Reading $w={213} $left={17}>
          <Txt $size={37.5} $color={GREEN} $ls={-1.2}>MA3:6.29亿</Txt>
          <TrendArrow color={GREEN} />
        </Reading>
        <CollapseButton>
          <svg width="20" height="32" viewBox="0 0 20 32"><path d="M17 3L4 16L17 29" fill="none" stroke="#fff" strokeWidth="4" strokeLinecap="round" /></svg>
        </CollapseButton>
      </IndicatorRow>
      <VolumeChart />
      <AiStrip>
        <AiBox>
          <AiInner>
            <AiLogo>问Ai</AiLogo>
            <Txt $size={41.5} $color="#999" $ls={0.3}>分析/复盘/选股，就问妙想AI</Txt>
            <SendButton>
              <svg width="44" height="38" viewBox="0 0 44 38"><path d="M3 19h36M25 4l15 15l-15 15" fill="none" stroke="#fff" strokeWidth="5" strokeLinecap="round" strokeLinejoin="round" /></svg>
            </SendButton>
          </AiInner>
        </AiBox>
      </AiStrip>
      <Nav />
    </Screen>
  );
}
